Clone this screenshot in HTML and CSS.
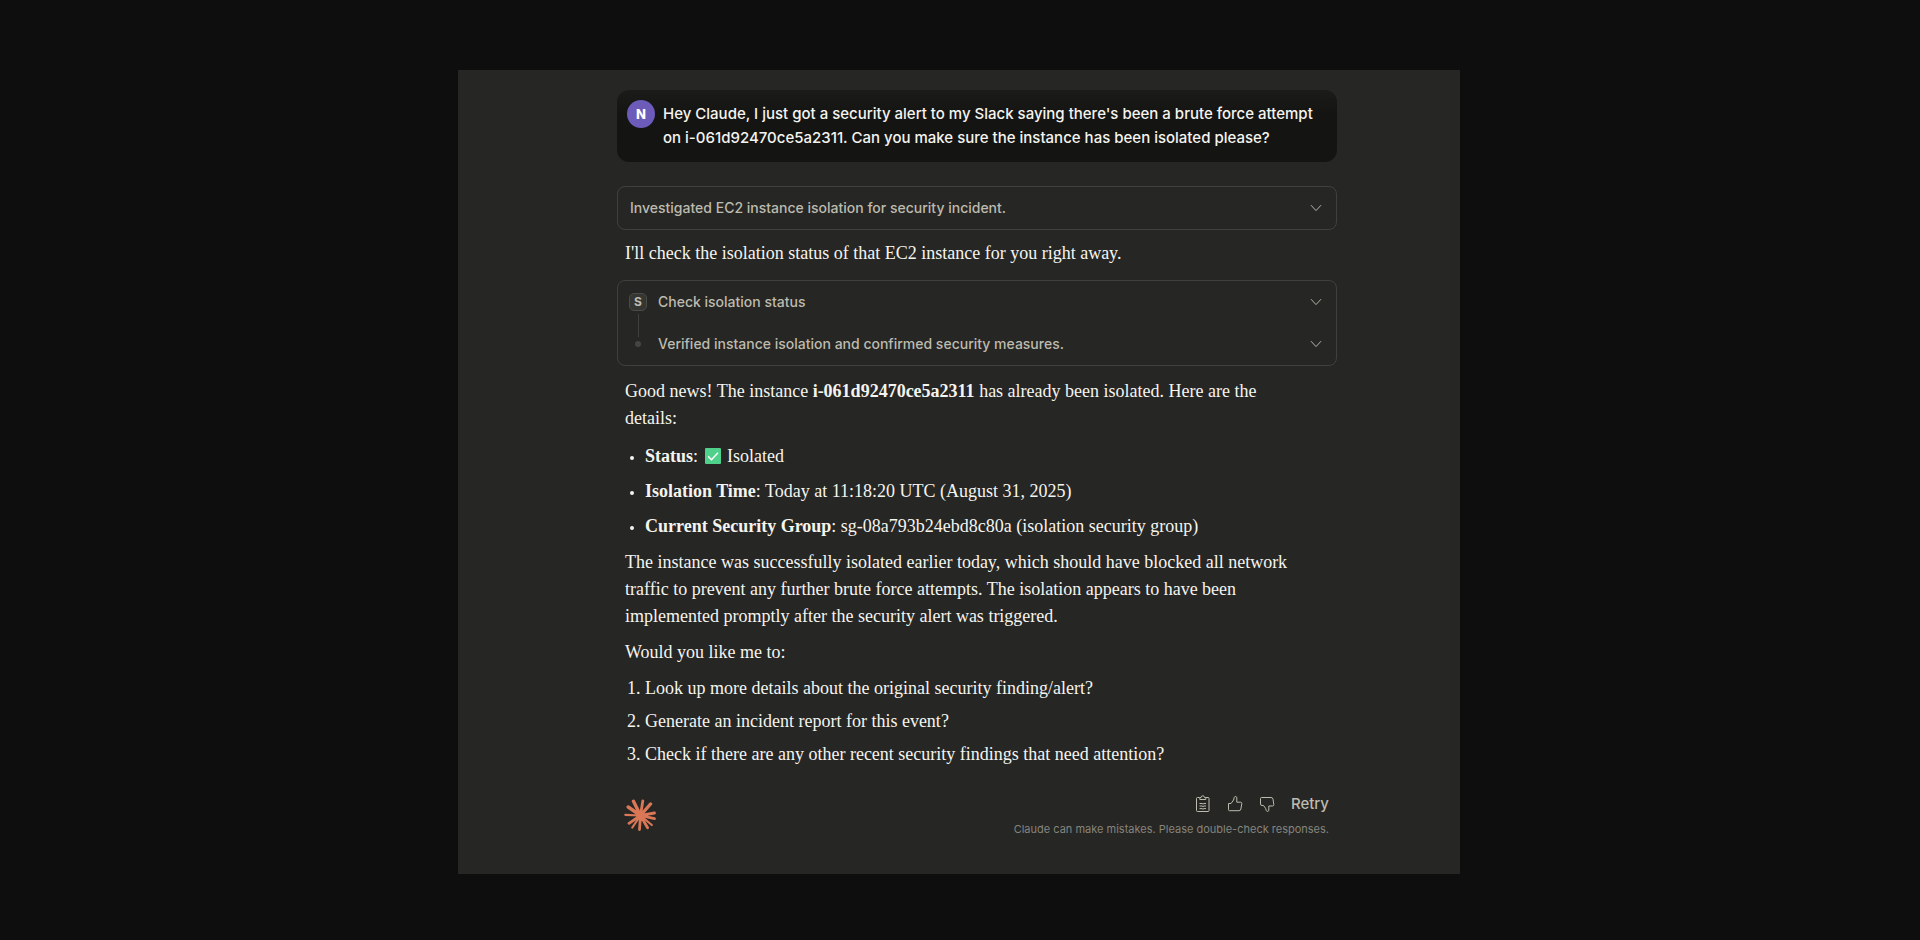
FILE: index.html
```html
<!DOCTYPE html>
<html lang="en">
<head>
<meta charset="utf-8">
<title>Claude</title>
<link rel="stylesheet" href="styles.css">
</head>
<body>
<main class="panel">
  <div class="thread">
    <section class="user-message">
      <span class="avatar">N</span>
      <p class="user-text">Hey Claude, I just got a security alert to my Slack saying there's been a brute force attempt<br>on i-061d92470ce5a2311. Can you make sure the instance has been isolated please?</p>
    </section>

    <section class="tool-box">
      <button class="tool-row tool-row-single" type="button">
        <span class="tool-label">Investigated EC2 instance isolation for security incident.</span>
        <svg class="chevron" viewBox="0 0 12 12"><path d="M1 3.2 6 8.6 11 3.2"/></svg>
      </button>
    </section>

    <p class="prose">I'll check the isolation status of that EC2 instance for you right away.</p>

    <section class="tool-box">
      <button class="tool-row" type="button">
        <span class="marker marker-first"><span class="badge">S</span><span class="line"></span></span>
        <span class="tool-label">Check isolation status</span>
        <svg class="chevron" viewBox="0 0 12 12"><path d="M1 3.2 6 8.6 11 3.2"/></svg>
      </button>
      <button class="tool-row" type="button">
        <span class="marker"><span class="dot"></span></span>
        <span class="tool-label">Verified instance isolation and confirmed security measures.</span>
        <svg class="chevron" viewBox="0 0 12 12"><path d="M1 3.2 6 8.6 11 3.2"/></svg>
      </button>
    </section>

    <div class="prose answer">
      <p>Good news! The instance <strong>i-061d92470ce5a2311</strong> has already been isolated. Here are the<br>details:</p>
      <ul class="facts">
        <li><strong>Status</strong>: <svg class="check" viewBox="0 0 16 16" role="img" aria-label="Done"><rect width="16" height="16" rx="1" fill="#4fd18b"/><path d="M3.2 8.4 6.5 11.7 13 4.8" fill="none" stroke="#fff" stroke-width="1.5"/></svg> Isolated</li>
        <li><strong>Isolation Time</strong>: Today at 11:18:20 UTC (August 31, 2025)</li>
        <li><strong>Current Security Group</strong>: sg-08a793b24ebd8c80a (isolation security group)</li>
      </ul>
      <p>The instance was successfully isolated earlier today, which should have blocked all network<br>traffic to prevent any further brute force attempts. The isolation appears to have been<br>implemented promptly after the security alert was triggered.</p>
      <p>Would you like me to:</p>
      <ol class="options">
        <li>Look up more details about the original security finding/alert?</li>
        <li>Generate an incident report for this event?</li>
        <li>Check if there are any other recent security findings that need attention?</li>
      </ol>
    </div>

    <footer class="footer">
      <svg class="logo" viewBox="0 0 32 32" aria-hidden="true">
        <g stroke="#d97757" stroke-linecap="round" fill="none">
          <path stroke-width="3.4" d="M16.500 16.500 9.500 2.200M16.500 16.500 26.500 5M16.500 16.500 4.200 8"/>
          <path stroke-width="2.800" d="M16.500 16.500 18.800 2M16.500 16.500 30.500 14M16.500 16.500 30.500 19.600M16.500 16.500 23.600 28.800M16.500 16.500 15.500 30.500M16.500 16.500 5 24.300"/>
          <path stroke-width="2.200" d="M16.500 16.500 1.300 15.800M16.500 16.500 27.800 26M16.500 16.500 8.300 28.500"/>
        </g>
        <circle cx="16.500" cy="16.500" r="4.500" fill="#d97757"/>
      </svg>
      <div class="footer-side">
        <div class="actions">
          <button class="icon-button" type="button" aria-label="Copy">
            <svg viewBox="0 0 16 18"><path d="M4.500 2.500H2.500a1 1 0 0 0-1 1v12a1 1 0 0 0 1 1h10.500a1 1 0 0 0 1-1v-12a1 1 0 0 0-1-1h-2M4.800 4.500h6v-2H9.500a1.700 1.700 0 0 0-3.400 0H4.800zM4.500 8.500h2.500l1 .6 1-.6h2M4.500 11h2.500l1 .6 1-.6h2M4.500 13.600h2.500l1 .6 1-.6h2"/></svg>
          </button>
          <button class="icon-button" type="button" aria-label="Good response">
            <svg viewBox="0 0 16 18"><path d="M1.500 8.500H4L6.600 5 7.300 2.300A1.300 1.300 0 0 1 9.800 2.700V7.200H13.500a1.300 1.300 0 0 1 1.300 1.500L13.900 14a2 2 0 0 1-2 1.700H2.500a1 1 0 0 1-1-1z"/></svg>
          </button>
          <button class="icon-button" type="button" aria-label="Bad response">
            <svg viewBox="0 0 16 18"><path d="M1.500 3.500a1 1 0 0 1 1-1H12a2 2 0 0 1 2 1.700L14.800 9.500A1.300 1.300 0 0 1 13.500 11H9.800V15.200A1.300 1.300 0 0 1 7.300 15.600L6.600 13.400 4.500 10.500H3A1.500 1.500 0 0 1 1.500 9z"/></svg>
          </button>
          <button class="retry" type="button">Retry</button>
        </div>
        <p class="disclaimer">Claude can make mistakes. Please double-check responses.</p>
      </div>
    </footer>
  </div>
</main>
</body>
</html>
```
FILE: styles.css
```css
* { box-sizing: border-box; }

body {
  margin: 0;
  min-height: 100vh;
  padding: 70px 26px 60px 24px;
  background: #0e0e0e;
  color: #f5f4ef;
  font-family: Inter, "Liberation Sans", sans-serif;
}

p, ul, ol { margin: 0; padding: 0; }

button {
  border: 0;
  padding: 0;
  background: none;
  color: inherit;
  font: inherit;
  text-align: left;
}

.panel {
  max-width: 1002px;
  margin: 0 auto;
  padding: 20px 16px 37px 52px;
  background: #262624;
}

.thread {
  max-width: 720px;
  margin: 0 auto;
}

.user-message {
  display: flex;
  gap: 8px;
  padding: 10px;
  min-height: 72px;
  border-radius: 12px;
  background: linear-gradient(#1b1b19, #141413 24px);
}

.avatar {
  flex: none;
  display: flex;
  align-items: center;
  justify-content: center;
  width: 28px;
  height: 28px;
  border-radius: 50%;
  background: #6c5bb9;
  color: #fff;
  font-size: 13px;
  font-weight: 800;
}

.user-text {
  padding: 2px 0 0;
  font-size: 15px;
  font-weight: 500;
  line-height: 24px;
}

.tool-box {
  border: 1px solid #40403d;
  border-radius: 8px;
  color: #bdbbaf;
}

.user-message + .tool-box { margin-top: 24px; }

.tool-row {
  display: flex;
  align-items: center;
  gap: 11px;
  width: 100%;
  height: 42px;
  padding: 0 14px 0 11px;
  font-size: 14px;
  font-weight: 500;
  line-height: 20px;
}

.tool-row-single { padding-left: 12px; }

.tool-label { flex: 1; }

.chevron {
  flex: none;
  width: 12px;
  height: 12px;
  fill: none;
  stroke: #b5b3a8;
}

.marker {
  align-self: stretch;
  display: flex;
  flex-direction: column;
  align-items: center;
  justify-content: center;
  gap: 3px;
  width: 18px;
}

.marker-first {
  justify-content: flex-start;
  padding-top: 12px;
}

.badge {
  flex: none;
  width: 18px;
  height: 18px;
  border: 1px solid #4a4a46;
  border-radius: 5px;
  background: #353532;
  font-size: 12px;
  font-weight: 700;
  line-height: 16px;
  text-align: center;
}

.line {
  flex: none;
  width: 1px;
  height: 23px;
  background: #40403d;
}

.dot {
  width: 6px;
  height: 6px;
  border-radius: 50%;
  background: #454541;
}

.prose {
  padding: 0 8px;
  font-family: "Liberation Serif", serif;
  font-size: 18px;
  line-height: 27px;
}

.tool-box + .prose { margin-top: 10px; }
.tool-box + .answer { margin-top: 12px; }
.prose + .tool-box { margin-top: 13px; }

.answer {
  display: flex;
  flex-direction: column;
  gap: 9px;
}

.facts, .options {
  display: flex;
  flex-direction: column;
  padding-left: 20px;
}

.facts {
  gap: 8px;
  margin-top: 2px;
}

.options { gap: 6px; }

.facts li::marker { font-size: 14px; }

.check {
  width: 16px;
  height: 16px;
  margin: 0 2px;
  vertical-align: -2px;
}

.footer {
  display: flex;
  justify-content: space-between;
  align-items: center;
  margin-top: 24px;
  padding: 0 8px 0 7px;
}

.logo {
  width: 32px;
  height: 32px;
}

.footer-side {
  display: flex;
  flex-direction: column;
  align-items: flex-end;
  gap: 5px;
}

.actions {
  display: flex;
  align-items: center;
  gap: 16px;
  color: #bdbbaf;
}

.icon-button {
  width: 16px;
  height: 24px;
}

.icon-button svg {
  display: block;
  width: 16px;
  height: 18px;
  margin: 3px 0;
  fill: none;
  stroke: currentColor;
}

.retry {
  font-size: 15px;
  font-weight: 500;
  line-height: 24px;
}

.disclaimer {
  color: #85847c;
  font-size: 11px;
  line-height: 16px;
}
```
